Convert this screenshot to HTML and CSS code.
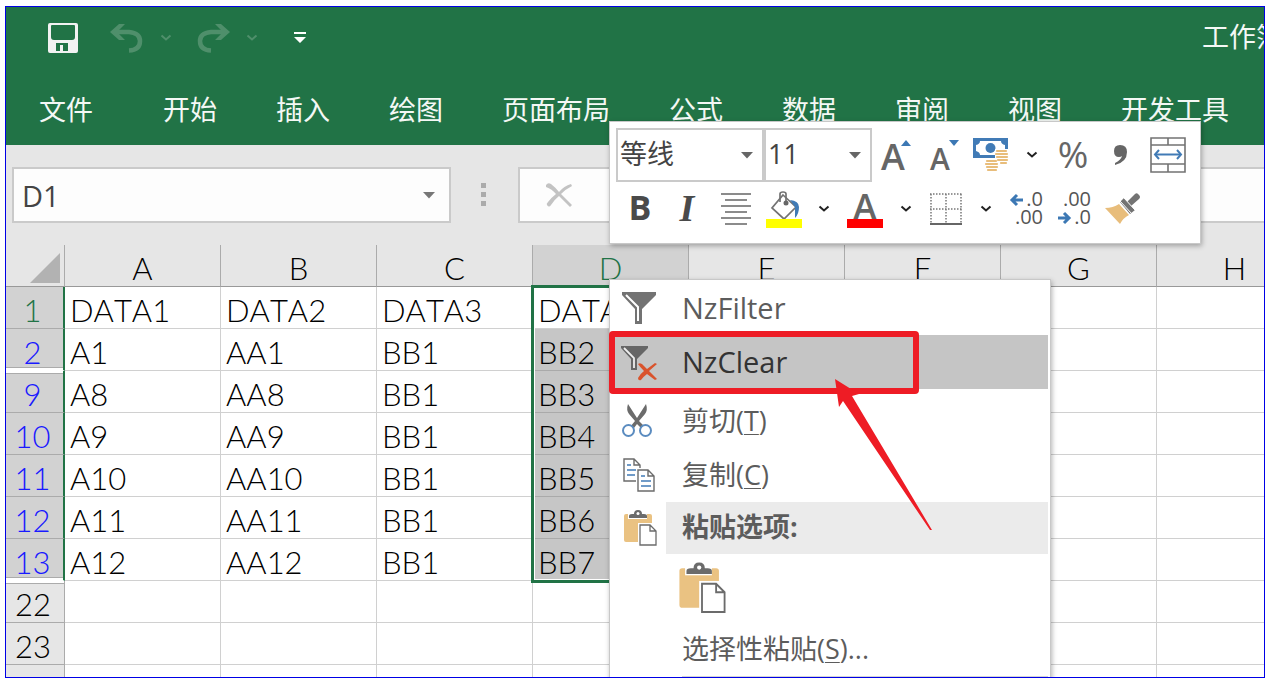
FILE: index.html
```
<!DOCTYPE html>
<html lang="zh-CN">
<head>
<meta charset="utf-8">
<title>工作簿</title>
<link rel="stylesheet" href="styles.css">
</head>
<body>
<svg class="defs" aria-hidden="true">
  <symbol id="chev" viewBox="0 0 12 8"><path d="M1.500 1.500 6 5.500 10.500 1.500" fill="none" stroke="currentColor" stroke-width="2"/></symbol>
  <symbol id="tri" viewBox="0 0 12 7"><path d="M0 0H12L6 6.500Z" fill="currentColor"/></symbol>
  <symbol id="paste" viewBox="0 0 34 36">
    <path d="M3 4H27Q29 4 29 6V32H3Q1 32 1 30V6Q1 4 3 4Z" fill="#eac282"/>
    <path d="M5 3H24V9H5Z" fill="#fff"/>
    <path d="M6 8V6Q6 4 9 4H11Q11 0 15 0Q19 0 19 4H21Q24 4 24 6V8Z" fill="#6b6b6b"/>
    <circle cx="15" cy="3.500" r="1.500" fill="#fff"/>
    <path d="M15 13H34V36H15Z" fill="#fff"/>
    <path d="M17 15H27L33 21V35H17ZM27 15V21H33" fill="#fff" stroke="#6b6b6b" stroke-width="1.300"/>
  </symbol>
  <symbol id="arc" viewBox="0 0 34 30">
    <path d="M0 9 9 1H15L9 7V11L15 17H9Z" fill="#4f8f6b"/>
    <path d="M5 9H19Q30 10 30 18Q30 27 19 27.500" fill="none" stroke="#4f8f6b" stroke-width="4.500"/>
  </symbol>
</svg>
<div class="window">
  <header class="ribbon">
    <div class="quick">
      <button class="qa save" aria-label="保存"><svg width="30" height="30" viewBox="0 0 30 30"><path fill-rule="evenodd" fill="#f2f2f2" d="M2 0H28Q30 0 30 2V28Q30 30 28 30H2Q0 30 0 28V2Q0 0 2 0ZM4 2Q3 2 3 3V14Q3 17 6 17H24Q27 17 27 14V3Q27 2 26 2ZM8 20V28H12V22H15V28H20V20Z"/></svg></button>
      <button class="qa undo" aria-label="撤消" disabled><svg width="34" height="30"><use href="#arc"/></svg></button>
      <button class="qa drop" aria-label="撤消选项" disabled><svg width="12" height="8"><use href="#chev"/></svg></button>
      <button class="qa undo" aria-label="恢复" disabled><svg width="34" height="30"><g transform="matrix(-1 0 0 1 34 0)"><use href="#arc"/></g></svg></button>
      <button class="qa drop" aria-label="恢复选项" disabled><svg width="12" height="8"><use href="#chev"/></svg></button>
      <button class="qa custom" aria-label="自定义快速访问工具栏"><svg width="12" height="12" viewBox="0 0 12 12"><path d="M0 0H12V2H0ZM0 5H12L6 11Z" fill="#fff"/></svg></button>
      <div class="title">工作簿</div>
    </div>
    <nav class="tabs">
      <button class="tab file">文件</button>
      <button class="tab">开始</button>
      <button class="tab">插入</button>
      <button class="tab">绘图</button>
      <button class="tab">页面布局</button>
      <button class="tab">公式</button>
      <button class="tab">数据</button>
      <button class="tab">审阅</button>
      <button class="tab">视图</button>
      <button class="tab">开发工具</button>
    </nav>
  </header>

  <div class="formula">
    <div class="namebox">
      <input class="name" value="D1" aria-label="名称框">
      <svg width="12" height="7"><use href="#tri"/></svg>
    </div>
    <svg class="dots" width="5" height="24" viewBox="0 0 5 24"><path d="M0 0H5V5H0ZM0 9H5V14H0ZM0 18H5V23H0Z" fill="#ababab"/></svg>
    <div class="entry">
      <button class="cancel" aria-label="取消"><svg width="26" height="24" viewBox="0 0 26 24"><path d="M0 2Q2-1 5 1Q9 4 13 9Q18 3 25 1L26 3Q20 6 15 11Q21 17 26 22L24 24Q18 18 13 13Q8 17 5 22Q3 25 1 22Q0 21 2 19Q6 14 10 11Q6 6 0 4Z" fill="#c3c3c3"/></svg></button>
    </div>
  </div>

  <main class="sheet">
    <table class="grid">
      <colgroup><col class="numcol"><col><col><col><col><col><col><col><col></colgroup>
      <thead>
        <tr><th class="corner"><svg width="30" height="30" viewBox="0 0 30 30"><path d="M30 0V30H0Z" fill="#b2b2b2"/></svg></th><th>A</th><th>B</th><th>C</th><th class="on">D</th><th>E</th><th>F</th><th>G</th><th>H</th></tr>
      </thead>
      <tbody>
        <tr><th class="sel first">1</th><td>DATA1</td><td>DATA2</td><td>DATA3</td><td>DATA4</td><td></td><td></td><td></td><td></td></tr>
        <tr><th class="sel above">2</th><td>A1</td><td>AA1</td><td>BB1</td><td class="pick">BB2</td><td></td><td></td><td></td><td></td></tr>
        <tr><th class="sel below">9</th><td>A8</td><td>AA8</td><td>BB1</td><td class="pick">BB3</td><td></td><td></td><td></td><td></td></tr>
        <tr><th class="sel">10</th><td>A9</td><td>AA9</td><td>BB1</td><td class="pick">BB4</td><td></td><td></td><td></td><td></td></tr>
        <tr><th class="sel">11</th><td>A10</td><td>AA10</td><td>BB1</td><td class="pick">BB5</td><td></td><td></td><td></td><td></td></tr>
        <tr><th class="sel">12</th><td>A11</td><td>AA11</td><td>BB1</td><td class="pick">BB6</td><td></td><td></td><td></td><td></td></tr>
        <tr><th class="sel above">13</th><td>A12</td><td>AA12</td><td>BB1</td><td class="pick">BB7</td><td></td><td></td><td></td><td></td></tr>
        <tr><th class="below">22</th><td></td><td></td><td></td><td></td><td></td><td></td><td></td><td></td></tr>
        <tr><th>23</th><td></td><td></td><td></td><td></td><td></td><td></td><td></td><td></td></tr>
        <tr><th></th><td></td><td></td><td></td><td></td><td></td><td></td><td></td><td></td></tr>
      </tbody>
    </table>
    <div class="range"></div>
  </main>

  <div class="mini">
    <div class="line">
      <label class="combo family"><select aria-label="字体"><option>等线</option></select><svg width="12" height="7"><use href="#tri"/></svg></label>
      <label class="combo size"><select aria-label="字号"><option>11</option></select><svg width="12" height="7"><use href="#tri"/></svg></label>
      <button class="tool w48" aria-label="增大字号"><svg width="32" height="40" viewBox="0 0 32 40"><text x="1" y="35" class="letter" font-size="36">A</text><path d="M21 11 26 5 31 11Z" fill="#3c78b4"/></svg></button>
      <button class="tool w48" aria-label="减小字号"><svg width="32" height="40" viewBox="0 0 32 40"><text x="2" y="35" class="letter" font-size="30">A</text><path d="M21 5H31L26 11Z" fill="#3c78b4"/></svg></button>
      <button class="tool w46" aria-label="会计数字格式"><svg width="36" height="34" viewBox="0 0 36 34">
        <path fill-rule="evenodd" fill="#417bb6" d="M0 0H35V20H0ZM7 3Q7 6 3 7V13Q7 14 7 17H28Q28 14 32 13V7Q28 6 28 3Z"/><circle cx="17.500" cy="10" r="5" fill="#417bb6"/>
        <path d="M22 11H36V27H27V34H12V21H22Z" fill="#fff"/>
        <g stroke="#e8bd7b" stroke-width="2.200" stroke-linecap="round"><path d="M24 13H33M23 16H34M24 19H34M25 22H34M28 25H33M14 23H23M13 26H24M14 29H24M15 32H23"/></g></svg></button>
      <button class="tool w36" aria-label="会计格式选项"><svg width="12" height="8"><use href="#chev"/></svg></button>
      <button class="tool w46 percent" aria-label="百分比样式">%</button>
      <button class="tool w48" aria-label="千位分隔样式"><svg width="14" height="20" viewBox="0 0 14 20"><path d="M7 0Q14 0 14 7Q14 17 2 20V18Q8 15 9 11Q8 12 6 12Q1 12 1 6Q1 0 7 0Z" fill="#666"/></svg></button>
      <button class="tool w48" aria-label="合并后居中"><svg width="36" height="36" viewBox="0 0 36 36"><path d="M1 1H35V35H1ZM1 8H35M1 27H35M18 1V8M18 27V35" fill="none" stroke="#737373" stroke-width="1.600"/><path d="M5 17.500H31" stroke="#417bb6" stroke-width="2"/><path d="M9 13 5 17.500 9 22M27 13 31 17.500 27 22" fill="none" stroke="#417bb6" stroke-width="2"/></svg></button>
    </div>
    <div class="line">
      <button class="tool w48 bold">B</button>
      <button class="tool w46 italic">I</button>
      <button class="tool w52" aria-label="居中"><svg width="30" height="34" viewBox="0 0 30 34"><path d="M0 2H30M4 8H26M0 14H30M4 20H26M0 26H30M4 32H26" stroke="#666" stroke-width="1.500"/></svg></button>
      <button class="tool w44" aria-label="填充颜色"><svg width="36" height="38" viewBox="0 0 36 38"><path d="M17 5 30 17 18 29 6 18Z" fill="#fff" stroke="#737373" stroke-width="1.700"/><path d="M14 12V4Q14 2 17 2Q20 2 20 4V12" fill="none" stroke="#737373" stroke-width="1.700"/><circle cx="20" cy="13" r="2.500" fill="#666"/><path d="M24 10Q33 11 33 17Q33 24 29 28V17Z" fill="#417bb6"/><path d="M0 29H36V38H0Z" fill="#ff0"/></svg></button>
      <button class="tool w36" aria-label="填充颜色选项"><svg width="12" height="8"><use href="#chev"/></svg></button>
      <button class="tool w46" aria-label="字体颜色"><svg width="36" height="38" viewBox="0 0 36 38"><text x="18" y="30" text-anchor="middle" class="letter" font-size="36">A</text><path d="M0 29H36V38H0Z" fill="red"/></svg></button>
      <button class="tool w36" aria-label="字体颜色选项"><svg width="12" height="8"><use href="#chev"/></svg></button>
      <button class="tool w44" aria-label="边框"><svg width="32" height="34" viewBox="0 0 32 34"><path d="M0 2H32M0 17H32M1 2V31M16 2V31M31 2V31" fill="none" stroke="#777" stroke-width="1.500" stroke-dasharray="1.500 1.500"/><path d="M0 32H32" stroke="#666" stroke-width="2"/></svg></button>
      <button class="tool w36" aria-label="边框选项"><svg width="12" height="8"><use href="#chev"/></svg></button>
      <button class="tool w46" aria-label="增加小数位数"><svg width="34" height="36" viewBox="0 0 34 36"><text x="33" y="15" class="num">.0</text><text x="33" y="33" class="num">.00</text><path d="M13 9H2M7 4 2 9 7 14" fill="none" stroke="#3c78b4" stroke-width="3"/></svg></button>
      <button class="tool w50" aria-label="减少小数位数"><svg width="34" height="36" viewBox="0 0 34 36"><text x="33" y="15" class="num">.00</text><text x="33" y="33" class="num">.0</text><path d="M0 27H11M6 22 11 27 6 32" fill="none" stroke="#3c78b4" stroke-width="3"/></svg></button>
      <button class="tool w46" aria-label="格式刷"><svg width="36" height="32" viewBox="0 0 36 32"><path d="M0 15Q8 15 14 11L24 22Q18 25 15 31Z" fill="#e8bd7b"/><path d="M15 9 19 5 30 17 25 21Z" fill="#737373"/><path d="M22 9 30 1Q32-1 34 2Q36 4 34 6L26 13Z" fill="#737373"/><path d="M15 8 27 21M19 5 30 17" stroke="#fff" stroke-width="1"/></svg></button>
    </div>
  </div>

  <div class="menu">
    <button class="item"><span class="icon"><svg width="34" height="34" viewBox="0 0 34 34"><path d="M0 1H34V4L20 18V33H13V18L0 4Z" fill="#737373"/><path d="M4 4 16 16V30" fill="none" stroke="#fff" stroke-width="2"/></svg></span><span class="text latin">NzFilter</span></button>
    <button class="item hot"><span class="icon"><svg width="36" height="36" viewBox="0 0 36 36"><path d="M0 2H27V4L16 15V26H10V15L0 4Z" fill="#666"/><path d="M3 4 13 14V24" fill="none" stroke="#eee" stroke-width="1.800"/><path d="M17 20Q20 18 23 22L26 25L34 19L36 20L28 27L36 35L34 36L26 30Q22 33 20 36Q17 37 17 34Q19 30 23 27Q19 23 17 20Z" fill="#d9532c"/></svg></span><span class="text latin">NzClear</span></button>
    <button class="item cut"><span class="icon"><svg width="34" height="34" viewBox="0 0 34 34"><path d="M6 0Q4 6 7 10L13 17 8 23 12 24 15 20 19 24 23 23 17 17 23 10Q26 6 24 0L15 14Z" fill="#6b6b6b"/><circle cx="6.500" cy="26.500" r="5.500" fill="#fff" stroke="#5b8cc0" stroke-width="2"/><circle cx="23.500" cy="26.500" r="5.500" fill="#fff" stroke="#5b8cc0" stroke-width="2"/></svg></span><span class="text">剪切(<u>T</u>)</span></button>
    <button class="item"><span class="icon"><svg width="32" height="34" viewBox="0 0 32 34"><g fill="#fff" stroke="#6b6b6b" stroke-width="1.400"><path d="M1 1H11L17 7V23H1ZM11 1V7H17"/><path d="M13 10H25L32 17V34H13Z" stroke="none"/><path d="M15 12H25L31 18V33H15ZM25 12V18H31"/></g><path d="M4 7H8M4 12H13M4 17H12M18 18H22M18 23H28M18 28H28" stroke="#417bb6" stroke-width="1.500"/></svg></span><span class="text">复制(<u>C</u>)</span></button>
    <div class="item head"><span class="icon"><svg width="34" height="36"><use href="#paste"/></svg></span><span class="text">粘贴选项:</span></div>
    <div class="item options"><button class="paste" aria-label="粘贴"><svg width="48" height="52"><use href="#paste"/></svg></button></div>
    <button class="item"><span class="icon"></span><span class="text">选择性粘贴(<u>S</u>)...</span></button>
    <hr>
  </div>

  <svg class="mark" width="330" height="204" viewBox="0 0 330 204" aria-hidden="true"><rect x="4" y="4" width="304" height="57" rx="1" fill="none" stroke="#ee1c25" stroke-width="6"/><path d="M227 49 251 64 244 66 324 200 322 200 235 71 231 77Z" fill="#ee1c25"/></svg>
</div>
</body>
</html>
```
FILE: styles.css
```
* { box-sizing: border-box; }
body {
  margin: 0;
  padding: 6px 3px 5px 5px;
  height: 100vh;
  display: flex;
  background: #fff;
  font-family: "Open Sans", "Noto Sans CJK SC", sans-serif;
}
button, input, select {
  font: inherit;
  color: inherit;
  background: none;
  border: 0;
  border-radius: 0;
  padding: 0;
  margin: 0;
}
svg { display: block; overflow: visible; }
.defs { position: absolute; width: 0; height: 0; }
.window {
  position: relative;
  flex: 1;
  min-width: 0;
  display: flex;
  flex-direction: column;
  border: 1px solid #0000e6;
  overflow: hidden;
}

.ribbon { background: #217346; color: #f4f8f5; font-size: 27px; flex: none; }
.quick { display: flex; height: 62px; padding-left: 22px; }
.qa { display: flex; align-items: center; justify-content: center; flex: none; }
.save { width: 70px; }
.undo { width: 58px; }
.drop { width: 20px; margin-right: 8px; color: #4f8f6b; }
.custom { width: 60px; }
.title { margin-left: auto; flex: none; width: 62px; overflow: hidden; white-space: nowrap; line-height: 60px; }
.tabs { display: flex; gap: 59px; height: 76px; padding: 2px 0 0 33px; white-space: nowrap; }
.tab { flex: none; }
.file { margin-right: 11px; }

.formula { flex: none; display: flex; align-items: flex-start; height: 100px; padding: 22px 0 0 6px; background: #e6e6e6; }
.namebox { display: flex; align-items: center; width: 439px; height: 56px; padding: 0 14px 0 8px; background: #fdfdfd; border: 2px solid #cacaca; color: #777; }
.name { flex: 1; min-width: 0; font-size: 29px; color: #444; }
.dots { margin: 16px 32px 0 30px; }
.entry { flex: 1; display: flex; height: 56px; padding-left: 26px; background: #fdfdfd; border: 2px solid #cacaca; border-right: 0; }

.sheet { position: relative; flex: 1; min-height: 0; overflow: hidden; }
.grid { width: 1307px; table-layout: fixed; border-collapse: separate; border-spacing: 0; font: 300 31px/36px Lato, sans-serif; font-kerning: none; color: #000; }
.numcol { width: 59px; }
.grid th, .grid td { height: 42px; padding: 5px 0 0; border-right: 1px solid #d0d0d0; border-bottom: 1px solid #d0d0d0; white-space: nowrap; }
.grid td { padding-left: 5px; }
.grid th { font-weight: 300; text-align: center; background: #e6e6e6; border-color: #ababab; }
.grid tbody th { padding-right: 4px; }
.grid thead th { border-bottom-color: #999; }
.grid .corner svg { margin: 0 0 0 24px; }
.grid .on { background: #d2d2d2; color: #217346; }
.grid .sel { background: #d2d2d2; color: #1a1aff; border-right: 2px solid #217346; }
.grid .first { color: #217346; }
.grid .above { border-bottom-color: #fff; box-shadow: inset 0 -2px #fff, inset 0 -3px #ababab; }
.grid .below { box-shadow: inset 0 2px #fff, inset 0 3px #ababab; }
.grid .pick { background: #c6c6c6; border-bottom-color: #aaa; }
.range { position: absolute; left: 525px; top: 40px; width: 160px; height: 298px; border: 3px solid #217346; box-shadow: inset 0 0 0 1px #fff; }

.mini { position: absolute; left: 603px; top: 114px; padding: 6px 8px 7px 6px; background: #fff; border: 1px solid #c8c8c8; box-shadow: 1px 2px 5px rgba(0, 0, 0, .3); }
.line { display: flex; height: 54px; }
.combo { display: grid; align-items: center; border: 2px solid #cacaca; color: #666; }
.combo select { grid-area: 1 / 1; appearance: none; width: 100%; height: 100%; padding: 0 0 4px 2px; font-size: 27px; color: #444; }
.combo svg { grid-area: 1 / 1; justify-self: end; margin-right: 9px; pointer-events: none; }
.family { width: 148px; }
.size { width: 108px; }
.tool { display: flex; align-items: center; justify-content: center; color: #222; }
.w36 { width: 36px; }
.w44 { width: 44px; }
.w46 { width: 46px; }
.w48 { width: 48px; }
.w50 { width: 50px; }
.w52 { width: 52px; }
.letter { font-family: "Open Sans", sans-serif; font-weight: 600; fill: #666; }
.num { font-family: "Open Sans", sans-serif; font-size: 20px; text-anchor: end; fill: #555; }
.percent { font-size: 37px; line-height: 50px; padding-bottom: 2px; color: #666; }
.bold { font-size: 34px; font-weight: 700; padding-bottom: 4px; color: #4a4a4a; }
.italic { font: italic bold 38px "Liberation Serif", serif; padding-bottom: 2px; color: #4a4a4a; }

.menu { position: absolute; left: 603px; top: 272px; width: 442px; padding: 1px 2px; background: #fff; border: 1px solid #c8c8c8; box-shadow: 1px 2px 5px rgba(0, 0, 0, .3); color: #5c5c5c; font-size: 27px; }
.item { display: flex; align-items: stretch; width: 100%; height: 54px; text-align: left; white-space: nowrap; }
.icon { width: 54px; flex: none; display: flex; align-items: center; justify-content: center; }
.text { flex: 1; padding-left: 16px; line-height: 54px; }
.text u { text-decoration-thickness: 1px; text-underline-offset: 3px; }
.latin { font-size: 29px; }
.hot { background: #c5c5c5; color: #333; }
.cut { margin-top: 5px; }
.head { height: 52px; font-weight: 700; }
.head .icon { padding-left: 2px; }
.head .text { background: #ebebeb; line-height: 50px; }
.options { height: 68px; padding-left: 66px; align-items: center; }
.menu hr { margin: 0 0 20px 70px; border: 0; border-top: 1px solid #d4d4d4; }

.mark { position: absolute; left: 602px; top: 323px; pointer-events: none; }
```
